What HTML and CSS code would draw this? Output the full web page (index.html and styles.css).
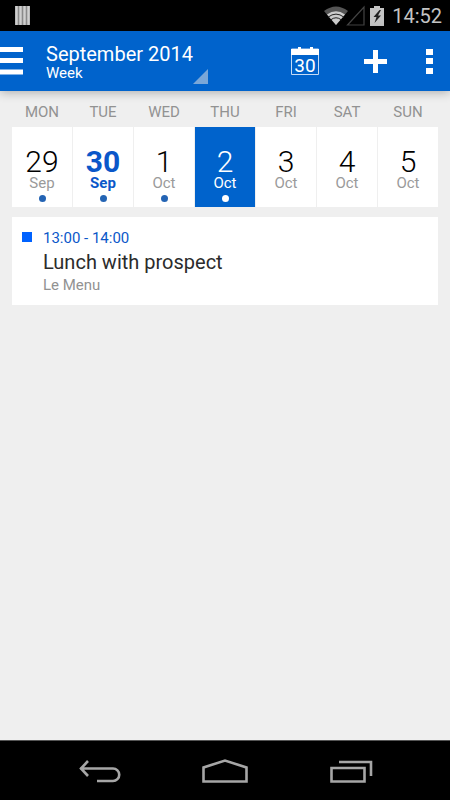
FILE: index.html
```
<!DOCTYPE html>
<html lang="en">
<head>
    <meta charset="UTF-8">
    <meta name="viewport" content="width=device-width, initial-scale=1.0">
    <title>Calendar</title>
    <link rel="stylesheet" href="styles.css">
</head>
<body>
    <div class="status-bar">
        <svg width="16" height="19" viewBox="0 0 16 19">
            <rect width="15" height="19" fill="#8a8a8a"/>
            <path d="M1.5 0v19M5.5 0v19M9.5 0v19M13.5 0v19" stroke="#d0d0d0" stroke-width="2.4"/>
        </svg>
        <div class="status-icons">
            <svg width="60" height="22" viewBox="0 0 60 22">
                <path d="M0 6Q12 -3 24 6L12 20Z" fill="#555"/>
                <path d="M3 9.5Q12 3 21 9.5L12 20Z" fill="#ccc"/>
                <path d="M4 12.2Q12 6 20 12.2M6.5 15Q12 10.5 17.5 15" fill="none" stroke="#222" stroke-width="1"/>
                <path d="M23.500 20H40V2Z" fill="none" stroke="#444" stroke-width="1.2"/>
                <path d="M46 3h4V1h6v2h4v18H46Z" fill="#c4c4c4"/>
                <path d="M55.500 5l-6 7h3l-2 6 6.500-7.500h-3l3-5.500Z" fill="#222"/>
            </svg>
            <span class="clock">14:52</span>
        </div>
    </div>

    <header class="action-bar">
        <button class="icon-button menu" aria-label="Menu">
            <svg width="23" height="28" viewBox="0 0 23 28"><path d="M0 2.500h23M0 13.500h23M0 25h23" stroke="#fff" stroke-width="5"/></svg>
        </button>
        <button class="view-picker">
            <span class="view-title">September 2014</span>
            <span class="view-mode">Week</span>
        </button>
        <div class="actions">
            <button class="icon-button" aria-label="Today">
                <svg width="28" height="28" viewBox="0 0 28 28">
                    <path d="M.5 2h27v25.500H.5Z" fill="none" stroke="#c5dbf5"/>
                    <path d="M0 2h7V0h3v2h9V0h3v2h6v6H0Z" fill="#fff"/>
                    <text x="14" y="25" text-anchor="middle" class="today-number">30</text>
                </svg>
            </button>
            <button class="icon-button" aria-label="New event">
                <svg width="29" height="28" viewBox="0 0 29 28"><path d="M6 14.500h23M17.500 3v23" stroke="#fff" stroke-width="5"/></svg>
            </button>
            <button class="icon-button" aria-label="More options">
                <svg width="7" height="28" viewBox="0 0 7 28"><path d="M0 2h7v6H0ZM0 11h7v6H0ZM0 21h7v6H0Z" fill="#fff"/></svg>
            </button>
        </div>
    </header>

    <main>
        <div class="week weekdays">
            <span>MON</span>
            <span>TUE</span>
            <span>WED</span>
            <span>THU</span>
            <span>FRI</span>
            <span>SAT</span>
            <span>SUN</span>
        </div>
        <div class="week">
            <button class="day has-event"><span class="number">29</span><span class="month">Sep</span></button>
            <button class="day today has-event"><span class="number">30</span><span class="month">Sep</span></button>
            <button class="day has-event"><span class="number">1</span><span class="month">Oct</span></button>
            <button class="day selected has-event"><span class="number">2</span><span class="month">Oct</span></button>
            <button class="day"><span class="number">3</span><span class="month">Oct</span></button>
            <button class="day"><span class="number">4</span><span class="month">Oct</span></button>
            <button class="day"><span class="number">5</span><span class="month">Oct</span></button>
        </div>

        <article class="event">
            <span class="event-color"></span>
            <div>
                <p class="event-time">13:00 - 14:00</p>
                <h2 class="event-title">Lunch with prospect</h2>
                <p class="event-place">Le Menu</p>
            </div>
        </article>
    </main>

    <nav class="nav-bar">
        <button class="icon-button" aria-label="Back">
            <svg width="44" height="26" viewBox="0 0 44 26"><path d="M2 10.500H35a6 6 0 0 1 0 12.500H19M10 3L3 10.500L10 18" fill="none" stroke="#a6a6a6" stroke-width="2.600"/></svg>
        </button>
        <button class="icon-button" aria-label="Home">
            <svg width="46" height="26" viewBox="0 0 46 26"><path d="M1.500 23.500V9.500L23 2.500L44.500 9.500V23.500Z" fill="none" stroke="#a6a6a6" stroke-width="2.600"/></svg>
        </button>
        <button class="icon-button" aria-label="Recent apps">
            <svg width="44" height="26" viewBox="0 0 44 26"><path d="M3.500 10H36.500V23.500H3.500ZM11 4H43V18" fill="none" stroke="#a6a6a6" stroke-width="2.600"/></svg>
        </button>
    </nav>
</body>
</html>
```

FILE: styles.css
```
* {
    box-sizing: border-box;
}
body {
    display: flex;
    flex-direction: column;
    min-height: 100vh;
    margin: 0;
    background-color: #efefef;
    font-family: Roboto, "Liberation Sans", sans-serif;
}
p, h2 {
    margin: 0;
    font-weight: normal;
}
button {
    padding: 0;
    border: none;
    background: none;
    font-family: inherit;
    color: inherit;
    cursor: pointer;
}
svg {
    display: block;
    overflow: visible;
}
.status-bar {
    display: flex;
    align-items: center;
    justify-content: space-between;
    height: 31px;
    padding: 0 8px 0 15px;
    background-color: #000;
}
.status-icons {
    display: flex;
    align-items: center;
    gap: 8px;
}
.clock {
    font-size: 20px;
    line-height: 30px;
    color: #c4c4c4;
}
.action-bar {
    display: flex;
    align-items: center;
    height: 60px;
    padding-right: 17px;
    background-color: #0063cc;
    box-shadow: 0 1px 10px rgba(0, 0, 0, 0.3);
    color: #fff;
}
.menu {
    margin-right: 23px;
}
.view-picker {
    position: relative;
    width: 162px;
    padding: 4px 0;
    text-align: left;
}
.view-picker::after {
    content: "";
    position: absolute;
    right: 0;
    bottom: 0;
    width: 15px;
    height: 15px;
    background-color: #7aa7d8;
    clip-path: polygon(100% 0, 100% 100%, 0 100%);
}
.view-title, .view-mode {
    display: block;
}
.view-title {
    font-size: 20px;
    line-height: 24px;
}
.view-mode {
    font-size: 15px;
    line-height: 14px;
}
.actions {
    display: flex;
    align-items: center;
    gap: 39px;
    margin-left: auto;
}
.today-number {
    font-size: 19px;
    fill: #fff;
}
main {
    flex: 1;
    padding: 10px 12px;
}
.week {
    display: grid;
    grid-template-columns: repeat(7, 1fr);
    gap: 1px;
}
.weekdays {
    margin-bottom: 4px;
    font-size: 15px;
    line-height: 22px;
    text-align: center;
    color: #929292;
}
.day {
    position: relative;
    height: 80px;
    padding-top: 2px;
    background-color: #fff;
}
.number, .month {
    display: block;
}
.number {
    font-size: 30px;
    line-height: 30px;
    font-weight: 300;
    color: #000;
}
.month {
    font-size: 15px;
    line-height: 12px;
    color: #9a9a9a;
}
.today .number, .today .month {
    font-weight: bold;
    color: #0a57c9;
}
.selected {
    background-color: #0063cc;
}
.selected .number, .selected .month {
    color: #fff;
}
.has-event::after {
    content: "";
    position: absolute;
    bottom: 5px;
    left: calc(50% - 3px);
    width: 7px;
    height: 7px;
    border-radius: 50%;
    background-color: #2464b4;
}
.selected::after {
    background-color: #fff;
}
.event {
    display: flex;
    gap: 11px;
    margin-top: 10px;
    padding: 10px;
    background-color: #fff;
}
.event-color {
    width: 10px;
    height: 10px;
    margin-top: 5px;
    background-color: #0062ff;
}
.event-time {
    font-size: 15px;
    line-height: 22px;
    color: #0a57c9;
}
.event-title {
    font-size: 20px;
    line-height: 26px;
    color: #2b2b2b;
}
.event-place {
    font-size: 15px;
    line-height: 20px;
    color: #929292;
}
.nav-bar {
    display: flex;
    align-items: center;
    justify-content: center;
    gap: 80px;
    height: 60px;
    border-top: 1px solid #555;
    background-color: #000;
}
```
